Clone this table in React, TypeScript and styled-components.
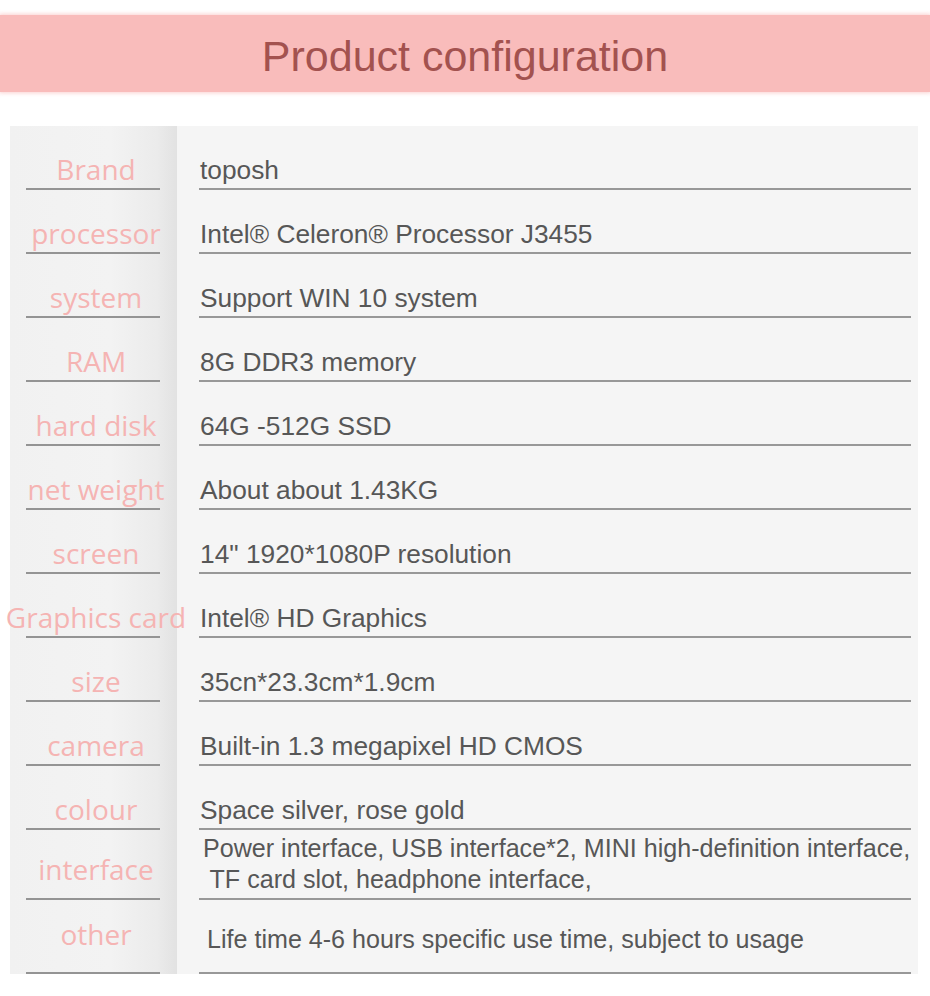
import styled, { createGlobalStyle } from "styled-components";

const GlobalStyle = createGlobalStyle`
  body {
    margin: 0;
    background: #ffffff;
    font-family: "Liberation Sans", Arial, sans-serif;
  }
`;

const Page = styled.div`
  width: 930px;
  padding: 15px 0 22px;
`;

const Banner = styled.header`
  height: 77px;
  padding-top: 5px;
  box-sizing: border-box;
  background-color: #f9bcbb;
  box-shadow: 0 0 4px 1px rgba(249, 188, 187, 0.7);
  display: flex;
  justify-content: center;
`;

const Title = styled.h1`
  margin: 0;
  font-family: "Liberation Sans", Arial, sans-serif;
  font-weight: normal;
  font-size: 43px;
  line-height: 72px;
  color: #a3524f;
`;

const Panel = styled.section`
  margin: 34px 0 0 10px;
  width: 908px;
  background-color: #f5f5f5;
`;

const Row = styled.div<{ $height: number }>`
  display: grid;
  grid-template-columns: 167px 1fr;
  height: ${(p) => p.$height}px;
`;

const LabelCell = styled.div`
  display: flex;
  padding: 0 17px 0 16px;
  background: linear-gradient(
    to right,
    #f1f1f1 0%,
    #f3f3f3 60%,
    #ebebeb 88%,
    #e2e2e2 100%
  );
`;

const Label = styled.div<{ $pb: number }>`
  flex: 1;
  min-width: 0;
  display: flex;
  justify-content: center;
  align-items: flex-end;
  padding: 0 0 ${(p) => p.$pb}px 6px;
  border-bottom: 2px solid #949494;
  font-family: "Open Sans", "Noto Sans", sans-serif;
  font-size: 28px;
  line-height: 34px;
  color: #f5b4b3;
  white-space: nowrap;
`;

const ValueCell = styled.div`
  display: flex;
  padding: 0 7px 0 22px;
`;

const Value = styled.div<{ $pb: number; $indent: number; $size: number; $lh: number }>`
  flex: 1;
  display: flex;
  flex-direction: column;
  justify-content: flex-end;
  padding: 0 0 ${(p) => p.$pb}px ${(p) => p.$indent + 1}px;
  border-bottom: 2px solid #989898;
  font-family: "Liberation Sans", Arial, sans-serif;
  font-size: ${(p) => p.$size}px;
  line-height: ${(p) => p.$lh}px;
  color: #575757;
  white-space: pre;
`;

type Spec = {
  label: string;
  value: string[];
  height?: number;
  labelPb?: number;
  valuePb?: number;
  indent?: number;
  size?: number;
  lh?: number;
};

const specs: Spec[] = [
  { label: "Brand", value: ["toposh"] },
  { label: "processor", value: ["Intel® Celeron® Processor J3455"] },
  { label: "system", value: ["Support WIN 10 system"] },
  { label: "RAM", value: ["8G DDR3 memory"] },
  { label: "hard disk", value: ["64G -512G SSD"] },
  { label: "net weight", value: ["About about 1.43KG"] },
  { label: "screen", value: ['14" 1920*1080P resolution'] },
  { label: "Graphics card", value: ["Intel® HD Graphics"] },
  { label: "size", value: ["35cn*23.3cm*1.9cm"] },
  { label: "camera", value: ["Built-in 1.3 megapixel HD CMOS"] },
  { label: "colour", value: ["Space silver, rose gold"] },
  {
    label: "interface",
    value: [
      "Power interface, USB interface*2, MINI high-definition interface,",
      " TF card slot, headphone interface,",
    ],
    height: 70,
    labelPb: 12,
    valuePb: 3,
    indent: 3,
    size: 25.1,
    lh: 31,
  },
  {
    label: "other",
    value: ["Life time 4-6 hours specific use time, subject to usage"],
    height: 74,
    labelPb: 21,
    valuePb: 18,
    indent: 7,
    size: 25.1,
  },
];

const App = () => {
  return (
    <Page>
      <GlobalStyle />
      <Banner>
        <Title>Product configuration</Title>
      </Banner>
      <Panel>
        {specs.map((s) => (
          <Row key={s.label} $height={s.height ?? 64}>
            <LabelCell>
              <Label $pb={s.labelPb ?? 2}>{s.label}</Label>
            </LabelCell>
            <ValueCell>
              <Value
                $pb={s.valuePb ?? 3}
                $indent={s.indent ?? 0}
                $size={s.size ?? 26.3}
                $lh={s.lh ?? 30}
              >
                {s.value.map((line) => (
                  <span key={line}>{line}</span>
                ))}
              </Value>
            </ValueCell>
          </Row>
        ))}
      </Panel>
    </Page>
  );
};

export default App;
